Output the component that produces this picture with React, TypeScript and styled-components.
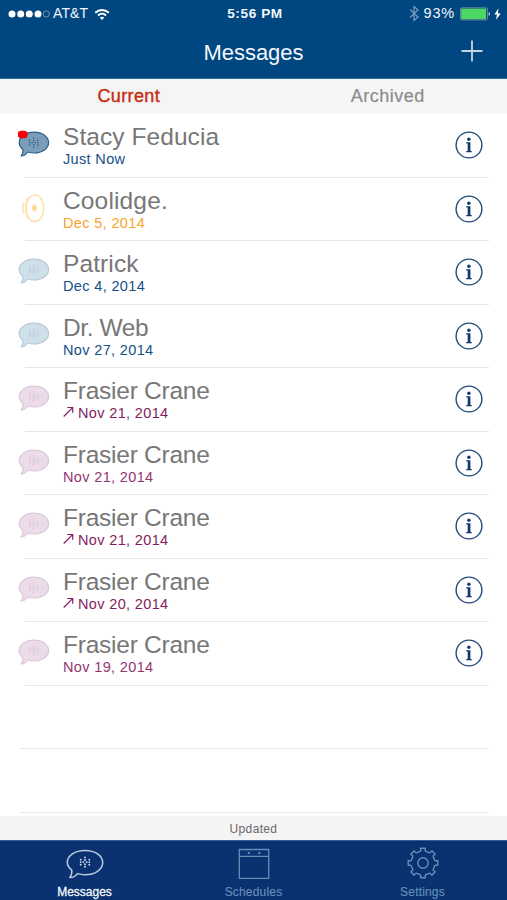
import React from 'react';
import styled, { createGlobalStyle } from 'styled-components';

const GlobalStyle = createGlobalStyle`
  * { box-sizing: border-box; }
  body { margin: 0; background: #fff; font-family: "Liberation Sans", Arial, sans-serif; }
`;

const Screen = styled.div`
  width: 507px;
  height: 900px;
  display: flex;
  flex-direction: column;
  overflow: hidden;
  background: #fff;
`;

const Header = styled.header`
  height: 79px;
  flex: none;
  background: #004680;
  border-bottom: 1px solid #2d7099;
  color: #f2f7fb;
`;

const StatusBar = styled.div`
  height: 27px;
  display: grid;
  grid-template-columns: 1fr auto 1fr;
  align-items: center;
  padding: 0 5px 0 8px;
  font-size: 13.5px;
  line-height: 27px;
`;

const StatusGroup = styled.div<{ $end?: boolean }>`
  display: flex;
  align-items: center;
  justify-content: ${p => (p.$end ? 'flex-end' : 'flex-start')};
`;

const Carrier = styled.span`
  margin: 0 6px 0 3px;
  font-size: 14px;
  letter-spacing: 0.1px;
`;

const Clock = styled.span`
  font-weight: bold;
  font-size: 13.6px;
  letter-spacing: 0.6px;
`;

const Percent = styled.span`
  margin: 0 5px 0 5px;
  font-size: 14.5px;
  letter-spacing: 0.8px;
`;

const TitleBar = styled.div`
  height: 51px;
  display: grid;
  grid-template-columns: 1fr auto 1fr;
  align-items: center;
`;

const Title = styled.h1`
  grid-column: 2;
  margin: 0;
  font-size: 22px;
  font-weight: normal;
  line-height: 50px;
  letter-spacing: -0.05px;
`;

const AddButton = styled.button`
  justify-self: end;
  margin: -3px 24px 0 0;
  padding: 0;
  border: 0;
  background: none;
  display: flex;
`;

const Segments = styled.nav`
  height: 35px;
  flex: none;
  display: grid;
  grid-template-columns: 1fr 1fr;
  background: linear-gradient(#f5f5f5 34px, #fafafa 34px);
`;

const Segment = styled.button<{ $active?: boolean }>`
  border: 0;
  padding: 0 0 0 ${p => (p.$active ? 4 : 15)}px;
  background: none;
  font: 18px/35px "Liberation Sans", Arial, sans-serif;
  letter-spacing: ${p => (p.$active ? 0.38 : 0.5)}px;
  color: ${p => (p.$active ? '#c62f12' : '#8c8c8c')};
  -webkit-text-stroke: ${p => (p.$active ? 0.4 : 0.2)}px currentColor;
`;

const List = styled.ul`
  flex: 1;
  min-height: 0;
  margin: 0;
  padding: 0;
  list-style: none;
  overflow: hidden;
`;

const Row = styled.li`
  height: 63.5px;
  display: flex;
  padding: 0 18px;
`;

const Avatar = styled.div`
  width: 45px;
  padding-top: 16px;
  flex: none;
`;

const RowBody = styled.div`
  flex: 1;
  display: flex;
  justify-content: space-between;
`;

const Details = styled.div`
  padding-top: 8px;
`;

const Name = styled.div<{ $track: number }>`
  font-size: 24.5px;
  line-height: 30px;
  color: #777;
  letter-spacing: ${p => p.$track}px;
  white-space: nowrap;
`;

const Stamp = styled.div<{ $color: string }>`
  display: flex;
  align-items: center;
  height: 15px;
  font-size: 14.5px;
  line-height: 15px;
  letter-spacing: 0.35px;
  color: ${p => p.$color};
`;

const ArrowBox = styled.span`
  width: 15px;
  height: 15px;
  display: flex;
`;

const InfoButton = styled.button`
  margin: 17px 6px 0 0;
  padding: 0;
  border: 0;
  width: 28px;
  height: 28px;
  background: none;
`;

const Divider = styled.div<{ $inset: number }>`
  height: 1px;
  margin: -1px 18px 0 ${p => p.$inset}px;
  background: #e6e6e6;
`;

const UpdateBar = styled.div`
  height: 24px;
  flex: none;
  background: #f4f4f4;
  color: #686868;
  text-align: center;
  font-size: 12px;
  line-height: 26px;
  letter-spacing: 0.35px;
`;

const TabBar = styled.nav`
  height: 60px;
  flex: none;
  display: grid;
  grid-template-columns: repeat(3, 1fr);
  background: #0a3170;
  border-top: 1px solid #315f94;
`;

const Tab = styled.button<{ $active?: boolean }>`
  padding: 5px 0 0;
  border: 0;
  background: none;
  display: flex;
  flex-direction: column;
  align-items: center;
  gap: 4px;
  font: 12px/15px "Liberation Sans", Arial, sans-serif;
  letter-spacing: ${p => (p.$active ? 0 : 0.18)}px;
  color: ${p => (p.$active ? '#f2f5fa' : '#6490b8')};
  -webkit-text-stroke: ${p => (p.$active ? 0.3 : 0.15)}px currentColor;
`;

const dots = [[0, -4.4], [-4.1, -2.3], [4.1, -2.3], [0, -1.9], [-4.1, 0.1], [4.1, 0.1], [-1.6, 0.1], [1.6, 0.1], [0, 2.1], [-4.1, 2.5], [4.1, 2.5], [0, 4.5]];

type BubbleProps = { stroke: string; fill: string; dot: string; alert?: boolean };

function Bubble({ stroke, fill, dot, alert }: BubbleProps) {
  return (
    <svg width="32" height="28" viewBox="0 0 32 28" display="block">
      <path d="M5.1 19.7C2.5 17.6 1.2 15.3 1.2 12.5C1.2 6.6 7.8 2.2 16 2.2C24.4 2.2 30.6 6.6 30.6 12.6C30.6 18.5 24.3 23 16 23C13.7 23 11.6 22.7 9.7 22C8 24.5 5.7 26 3.1 26C4.5 24.2 5.1 22.2 5.1 19.7Z" fill={fill} stroke={stroke} strokeWidth="1.2" strokeLinejoin="round" />
      {dots.map(([x, y], i) => <circle key={i} cx={15.7 + x} cy={12.6 + y} r="0.75" fill={dot} />)}
      {alert && <rect x="-0.4" y="0.7" width="10.2" height="7.5" rx="3.7" fill="#fb0007" />}
    </svg>
  );
}

function Speaker() {
  return (
    <svg width="32" height="32" viewBox="0 0 32 32" display="block">
      <g fill="none" stroke="#ffdca4" strokeWidth="1.4">
        <ellipse cx="16.8" cy="14.2" rx="9" ry="13.3" />
        <path d="M10 3.5C7.2 9 7.2 19.3 10 24.8M6 8.7C4.4 11.5 4.4 16.7 6 19.5" />
      </g>
      <ellipse cx="16.4" cy="13.9" rx="2.6" ry="3.6" fill="#ffdfaa" />
      <path d="M16.5 12v4" stroke="#ffc866" strokeWidth="1.2" />
    </svg>
  );
}

function InfoIcon() {
  return (
    <svg width="28" height="28" viewBox="0 0 28 28" display="block">
      <circle cx="14" cy="14" r="12.9" fill="#fff" stroke="#244b7b" strokeWidth="1.4" />
      <circle cx="13.9" cy="8.2" r="1.7" fill="#12376d" />
      <path d="M11.2 11.3h4.2v8.8h1.3v1.1h-5.5v-1.1h1.5v-7.6h-1.5z" fill="#12376d" />
    </svg>
  );
}

function gearOutline() {
  const points: string[] = [];
  for (let i = 0; i < 8; i++) {
    [[-15, 12], [-10.5, 12.3], [-9, 15], [9, 15], [10.5, 12.3], [15, 12]].forEach(([offset, radius]) => {
      const angle = ((i * 45 + offset - 90) * Math.PI) / 180;
      points.push(`${17 + Math.cos(angle) * radius},${17 + Math.sin(angle) * radius}`);
    });
  }
  return points.join(' ');
}

const blue = { stroke: '#b5cad8', fill: '#d0e0ea', dot: '#aac2d1' };
const pink = { stroke: '#dac7d8', fill: '#ecdce9', dot: '#d2bed0' };
const unread = { stroke: '#265f91', fill: '#7b9db8', dot: '#245987', alert: true };

type Message = { name: string; date: string; color: string; track: number; icon: BubbleProps | null; sent?: boolean };

const messages: Message[] = [
  { name: 'Stacy Feducia', date: 'Just Now', color: '#165086', track: 0.07, icon: unread },
  { name: 'Coolidge.', date: 'Dec 5, 2014', color: '#f8a32b', track: 0.15, icon: null },
  { name: 'Patrick', date: 'Dec 4, 2014', color: '#165086', track: 0.1, icon: blue },
  { name: 'Dr. Web', date: 'Nov 27, 2014', color: '#165086', track: -0.4, icon: blue },
  ...[
    ['Nov 21, 2014', true], ['Nov 21, 2014', false], ['Nov 21, 2014', true],
    ['Nov 20, 2014', true], ['Nov 19, 2014', false],
  ].map(([date, sent]) => ({
    name: 'Frasier Crane', date: date as string, color: sent ? '#851c62' : '#963473',
    track: -0.24, icon: pink, sent: sent as boolean,
  })),
];

export default function App() {
  return (
    <>
      <GlobalStyle />
      <Screen>
        <Header>
          <StatusBar>
            <StatusGroup>
              <svg width="42" height="10" viewBox="0 0 42 10">
                {[4, 12.7, 21.3, 30].map(x => <circle key={x} cx={x} cy="5" r="3.5" fill="#fff" />)}
                <circle cx="38.3" cy="5" r="3.1" fill="none" stroke="#7295b5" />
              </svg>
              <Carrier>AT&amp;T</Carrier>
              <svg width="16" height="12" viewBox="0 0 16 12" fill="none" stroke="#fff" strokeWidth="2">
                <path d="M1.2 4.7C5.1 1 10.9 1 14.8 4.7M4 7.4C6.3 5.3 9.7 5.3 12 7.4" />
                <path d="M8 12L5.7 9.6Q8 7.8 10.3 9.6Z" fill="#fff" stroke="none" />
              </svg>
            </StatusGroup>
            <Clock>5:56 PM</Clock>
            <StatusGroup $end>
              <svg width="10" height="17" viewBox="0 0 10 17" fill="none" stroke="#7b9dbd" strokeWidth="1.2">
                <path d="M1 4.5L9 12L5 15.5V1.5L9 5L1 12.5" />
              </svg>
              <Percent>93%</Percent>
              <svg width="42" height="14" viewBox="0 0 42 14">
                <rect x="0.4" y="0.9" width="27" height="12" rx="1.5" fill="none" stroke="#7c9da1" strokeWidth="0.9" />
                <rect x="1.2" y="1.7" width="24.8" height="10.4" fill="#4bd761" />
                <path d="M28.7 5Q31.2 7 28.7 9Z" fill="#dce6ee" />
                <path d="M38.5 1.3L34.4 7.5h2.6L36 12.7L40.8 6.4h-2.9Z" fill="#fff" />
              </svg>
            </StatusGroup>
          </StatusBar>
          <TitleBar>
            <Title>Messages</Title>
            <AddButton aria-label="New message">
              <svg width="22" height="22" viewBox="0 0 22 22">
                <path d="M11 0.5v21M0.5 11h21" stroke="#c9d5df" strokeWidth="1.8" />
              </svg>
            </AddButton>
          </TitleBar>
        </Header>
        <Segments>
          <Segment $active>Current</Segment>
          <Segment>Archived</Segment>
        </Segments>
        <List>
          {messages.map((m, i) => (
            <React.Fragment key={i}>
              <Row>
                <Avatar>{m.icon ? <Bubble {...m.icon} /> : <Speaker />}</Avatar>
                <RowBody>
                  <Details>
                    <Name $track={m.track}>{m.name}</Name>
                    <Stamp $color={m.color}>
                      {m.sent && (
                        <ArrowBox>
                          <svg width="12" height="12" viewBox="0 0 12 12" fill="none" stroke={m.color} strokeWidth="1.2">
                            <path d="M0.7 10.5L9.6 1.6M4.3 1.5H9.7V6.8" />
                          </svg>
                        </ArrowBox>
                      )}
                      {m.date}
                    </Stamp>
                  </Details>
                  <InfoButton aria-label="Details"><InfoIcon /></InfoButton>
                </RowBody>
              </Row>
              <Divider $inset={25} />
            </React.Fragment>
          ))}
          {[0, 1].map(i => (
            <React.Fragment key={i}>
              <Row />
              <Divider $inset={20} />
            </React.Fragment>
          ))}
        </List>
        <UpdateBar>Updated</UpdateBar>
        <TabBar>
          <Tab $active>
            <svg width="38" height="35" viewBox="0 0 38 35">
              <path d="M5.8 24.2C2.8 21.8 1.3 19.3 1.3 16.3C1.3 9.5 9 4.4 19 4.4C29 4.4 36.7 9.5 36.7 16.6C36.7 23.6 29 28.7 19 28.7C16.2 28.7 13.7 28.4 11.6 27.6C9.5 30.2 7 31.7 3.8 31.5C5.5 29.4 6.1 27 5.8 24.2Z" fill="none" stroke="#b9c9df" strokeWidth="1.5" strokeLinejoin="round" />
              {dots.map(([x, y], i) => <circle key={i} cx={19 + x * 1.05} cy={16 + y * 1.05} r="0.95" fill="#d6e0ed" />)}
            </svg>
            Messages
          </Tab>
          <Tab>
            <svg width="32" height="35" viewBox="0 0 32 35" fill="none" stroke="#6490b8" strokeWidth="1.3">
              <path d="M1.3 3.5H30.7V32.3H1.3ZM1.3 10.3H30.7" />
              <path d="M9.8 7h2M20.3 7h2" strokeWidth="2" />
            </svg>
            Schedules
          </Tab>
          <Tab>
            <svg width="34" height="35" viewBox="0 0 34 35" fill="none" stroke="#6490b8" strokeWidth="1.4" strokeLinejoin="round">
              <polygon points={gearOutline()} />
              <circle cx="17" cy="17" r="5.2" />
            </svg>
            Settings
          </Tab>
        </TabBar>
      </Screen>
    </>
  );
}
